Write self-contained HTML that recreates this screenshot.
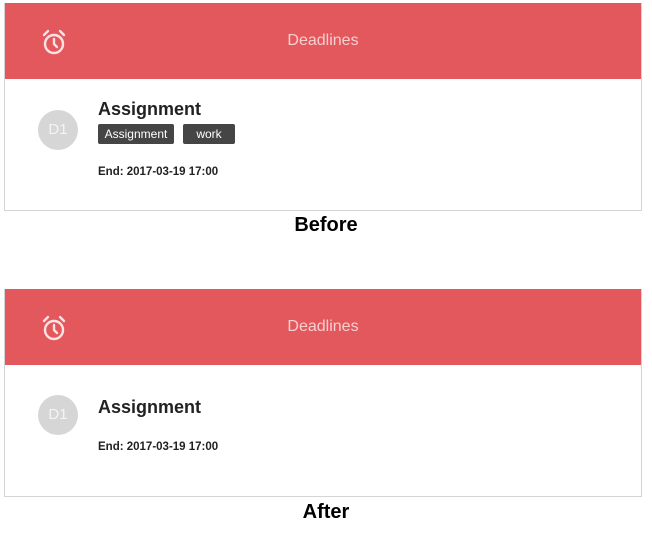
<!DOCTYPE html>
<html><head><style>
body{margin:0;width:652px;height:538px;background:#fff;font-family:"Liberation Sans",sans-serif;position:relative;overflow:hidden}
.card{position:absolute;left:4px;width:636px;border:1px solid #d4d4d4;border-top:none;background:#fff}
.hd{height:76px;background:#e3585c;position:relative}
.hd .t{position:absolute;left:0;right:0;text-align:center;top:29px;color:#f7cfd0;font-size:16px}
.hd svg{position:absolute;left:34px;top:24px}
.av{position:absolute;left:33px;width:40px;height:40px;border-radius:50%;background:#d6d6d6;color:#f4f4f4;font-size:15px;text-align:center;line-height:40px}
.ti{position:absolute;left:93px;font-size:18px;color:#222;font-weight:bold}
.tag{position:absolute;top:121px;height:20px;background:#454545;color:#fff;font-size:12px;line-height:20px;text-align:center;border-radius:2px}
.end{position:absolute;left:93px;font-size:11.5px;color:#222;font-weight:bold}
.cap{position:absolute;left:0;right:0;text-align:center;font-weight:bold;font-size:20px;color:#000}
</style></head><body>
<div class="card" style="top:3px;height:207px">
 <div class="hd"><svg width="30" height="30" viewBox="0 0 30 30" fill="none" stroke="#fbe3e3" stroke-width="2.4" stroke-linecap="round"><circle cx="15" cy="17" r="9"/><path d="M15 12v5l3 3M5 8l4-4M25 8l-4-4"/></svg><div class="t">Deadlines</div></div>
 <div class="av" style="top:107px">D1</div>
 <div class="ti" style="top:96px">Assignment</div>
 <div class="tag" style="left:93px;width:76px">Assignment</div>
 <div class="tag" style="left:178px;width:52px">work</div>
 <div class="end" style="top:163px">End: 2017-03-19 17:00</div>
</div>
<div class="cap" style="top:214px">Before</div>
<div class="card" style="top:289px;height:207px">
 <div class="hd"><svg width="30" height="30" viewBox="0 0 30 30" fill="none" stroke="#fbe3e3" stroke-width="2.4" stroke-linecap="round"><circle cx="15" cy="17" r="9"/><path d="M15 12v5l3 3M5 8l4-4M25 8l-4-4"/></svg><div class="t">Deadlines</div></div>
 <div class="av" style="top:106px">D1</div>
 <div class="ti" style="top:108px">Assignment</div>
 <div class="end" style="top:152px">End: 2017-03-19 17:00</div>
</div>
<div class="cap" style="top:501px">After</div>
</body></html>
